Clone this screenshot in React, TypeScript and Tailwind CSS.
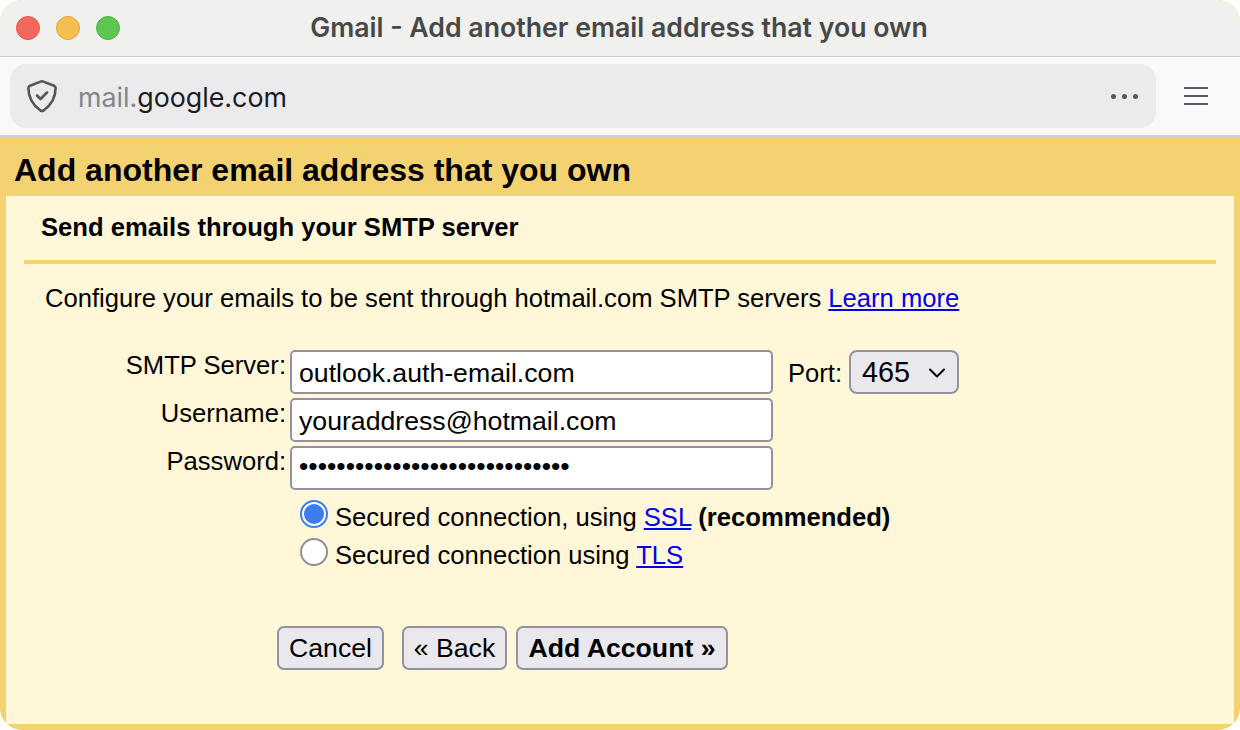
import { ChevronDown } from "lucide-react";

const sans = "font-['Liberation_Sans',Arial,sans-serif]";

const fieldClass =
  "h-[44px] w-[483px] rounded-[5px] border-2 border-[#9492a0] bg-white px-[7px] text-[26.67px] leading-none text-black outline-none";

const buttonClass =
  "h-[44px] rounded-[7px] border-2 border-[#9492a0] bg-[#e9e9ed] text-[26.67px] leading-none text-black";

const Field = ({ label, value, type = "text" }: { label: string; value: string; type?: string }) => (
  <div className="flex h-[44px] items-start">
    <label className="w-[286px] text-right text-[25.6px] leading-[30px] text-black">{label}</label>
    <input
      readOnly
      type={type}
      value={value}
      className={`ml-[4px] ${fieldClass} ${type === "password" ? "pb-[4px]" : "pt-[2px]"}`}
    />
  </div>
);

const App = () => {
  return (
    <div className="h-[730px] w-[1240px] bg-white">
      <div className={`flex h-full flex-col overflow-hidden rounded-[22px] bg-[#f4d272] ${sans}`}>
        {/* title bar */}
        <div className="relative flex h-[57px] shrink-0 items-center justify-center border-b border-[#cfcfd3] bg-[#f0f0ee]">
          <div className="absolute left-[16px] top-[16px] flex gap-[16px]">
            <span className="h-[24px] w-[24px] rounded-full border border-[#e2584f] bg-[#f2685f]" />
            <span className="h-[24px] w-[24px] rounded-full border border-[#e0a63f] bg-[#f5bf4f]" />
            <span className="h-[24px] w-[24px] rounded-full border border-[#4fb548] bg-[#5dc751]" />
          </div>
          <span className="-mt-[2px] -ml-[2px] font-['Inter',sans-serif] text-[26.7px] font-semibold text-[#484848]">
            Gmail - Add another email address that you own
          </span>
        </div>

        {/* toolbar */}
        <div className="flex h-[80px] shrink-0 items-center border-b-2 border-[#d0d0d2] bg-[#f9f9fb] pl-[10px]">
          <div className="flex h-[64px] w-[1146px] items-center rounded-[16px] bg-[#ebebed] pl-[16px]">
            <svg width="32" height="34" viewBox="0 0 32 34" fill="none" stroke="#55555b" strokeWidth="2.6" strokeLinecap="round" strokeLinejoin="round">
              <path d="M14.600 2.600a3 3 0 0 1 2.800 0L28 6.700q1.600.7 1.600 2.400C29.600 20 24 27 17.500 31.500a3 3 0 0 1-3 0C8 27 2.400 20 2.400 9.100q0-1.700 1.600-2.400Z" />
              <path d="m11 16.500 3.500 3.500 6.500-6.500" />
            </svg>
            <span className="ml-[20px] mt-[2px] font-['Inter',sans-serif] text-[26.8px] text-[#1c1b22]">
              <span className="text-[#85858a]">mail.</span>google.com
            </span>
            <div className="ml-auto mr-[18px] flex gap-[6px]">
              <span className="h-[5px] w-[5px] rounded-full bg-[#55555b]" />
              <span className="h-[5px] w-[5px] rounded-full bg-[#55555b]" />
              <span className="h-[5px] w-[5px] rounded-full bg-[#55555b]" />
            </div>
          </div>
          <div className="ml-[28px] flex w-[24px] flex-col gap-[6px]">
            <span className="h-[2px] bg-[#5b5b66]" />
            <span className="h-[2px] bg-[#5b5b66]" />
            <span className="h-[2px] bg-[#5b5b66]" />
          </div>
        </div>

        {/* page */}
        <div className="flex h-[59px] shrink-0 items-center pl-[14px] pt-[6px]">
          <h1 className="text-[32px] font-bold leading-none text-black">Add another email address that you own</h1>
        </div>
        <div className="mx-[6px] flex-1 bg-[#fff7d7]">
          <div className="mx-[18px] border-b-4 border-[#f4d272] pb-[18px] pl-[17px] pt-[16px]">
            <h2 className="text-[25.6px] font-bold leading-[30px] text-black">Send emails through your SMTP server</h2>
          </div>
          <p className="ml-[39px] mt-[19px] text-[25.6px] leading-[30px] text-black">
            Configure your emails to be sent through hotmail.com SMTP servers{" "}
            <a className="text-[#0000ee] underline">Learn more</a>
          </p>

          <div className="relative mt-[37px] flex flex-col gap-[4px] -ml-[6px]">
            <Field label="SMTP Server:" value="outlook.auth-email.com" />
            <Field label="Username:" value="youraddress@hotmail.com" />
            <Field label="Password:" value="abcdefghijklmnopqrstuvwxyzabc" type="password" />
            <div className="absolute left-[788px] top-0 flex h-[44px] items-center">
              <span className="mt-[2px] text-[25.6px] text-black">Port:</span>
              <div className="ml-[7px] flex h-[44px] w-[110px] items-center rounded-[8px] border-2 border-[#9492a0] bg-[#e9e9ed] pl-[11px] pt-[2px] text-[28.8px] text-black">
                465
                <ChevronDown className="ml-auto mr-[6px] h-[28px] w-[28px]" strokeWidth={1.7} />
              </div>
            </div>
          </div>

          <div className="ml-[294px] mt-[6px] flex flex-col gap-[2px] text-[25.6px] leading-[30px] text-black">
            <div className="flex items-center">
              <span className="flex h-[28px] w-[28px] items-center justify-center rounded-full border-2 border-[#3b7cf0] bg-white">
                <span className="h-[20px] w-[20px] rounded-full bg-[#3b7cf0]" />
              </span>
              <span className="ml-[7px] mt-[6px]">
                Secured connection, using <a className="text-[#0000ee] underline">SSL</a> <b>(recommended)</b>
              </span>
            </div>
            <div className="flex items-center">
              <span className="h-[28px] w-[28px] rounded-full border-2 border-[#8f8f9d] bg-white" />
              <span className="ml-[7px] mt-[6px]">
                Secured connection using <a className="text-[#0000ee] underline">TLS</a>
              </span>
            </div>
          </div>

          <div className="ml-[271px] mt-[56px] flex">
            <button className={`${buttonClass} w-[107px]`}>Cancel</button>
            <button className={`${buttonClass} ml-[18px] w-[105px]`}>« Back</button>
            <button className={`${buttonClass} ml-[9px] w-[212px] font-bold`}>Add Account »</button>
          </div>
        </div>
        <div className="h-[6px] shrink-0" />
      </div>
    </div>
  );
};

export default App;
